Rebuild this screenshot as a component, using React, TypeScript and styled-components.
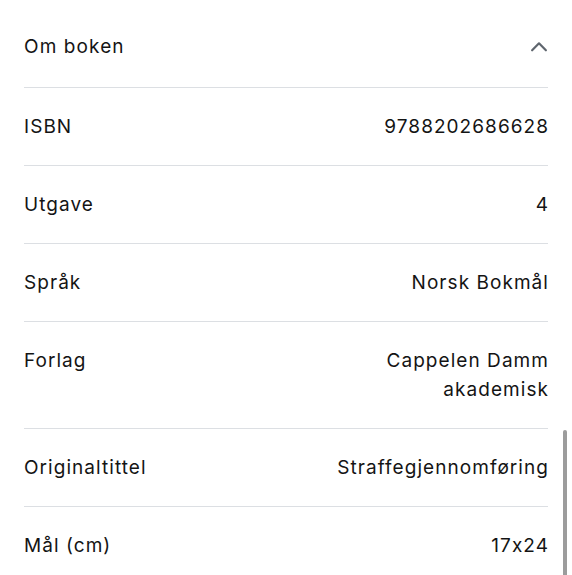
import styled, { createGlobalStyle } from 'styled-components';

const GlobalStyle = createGlobalStyle`
  html, body {
    margin: 0;
    padding: 0;
    background: #ffffff;
  }
  body {
    font-family: 'Inter', 'Noto Sans', sans-serif;
    color: #141414;
    -webkit-font-smoothing: antialiased;
  }
`;

const Page = styled.div`
  position: relative;
  width: 572px;
  height: 575px;
  overflow: hidden;
  background: #fff;
`;

const Section = styled.section`
  padding: 0 24px;
`;

const Header = styled.button`
  display: flex;
  align-items: center;
  justify-content: space-between;
  width: 100%;
  height: 88px;
  padding: 6px 0 0;
  box-sizing: border-box;
  background: none;
  border: none;
  border-bottom: 1px solid #dcdfe3;
  font-family: inherit;
  font-size: 19px;
  color: #141414;
  letter-spacing: 1.1px;
  cursor: pointer;
`;

const Chevron = styled.svg`
  width: 22px;
  height: 22px;
  margin-right: -2px;
  color: #5f666e;
`;

const List = styled.dl`
  margin: 0;
`;

const Row = styled.div`
  display: flex;
  justify-content: space-between;
  align-items: flex-start;
  gap: 24px;
  padding: 24px 0;
  line-height: 29px;
  font-size: 19px;
  letter-spacing: 1.05px;
  border-bottom: 1px solid #dcdfe3;
`;

const Label = styled.dt`
  margin: 0;
  flex-shrink: 0;
`;

const Value = styled.dd`
  margin: 0 -1px 0 0;
  text-align: right;
  max-width: 225px;
`;

const ScrollThumb = styled.div`
  position: absolute;
  right: 5px;
  top: 430px;
  width: 4px;
  height: 150px;
  border-radius: 2px;
  background: #9c9c9c;
`;

const details: [string, string][] = [
  ['ISBN', '9788202686628'],
  ['Utgave', '4'],
  ['Språk', 'Norsk Bokmål'],
  ['Forlag', 'Cappelen Damm akademisk'],
  ['Originaltittel', 'Straffegjennomføring'],
  ['Mål (cm)', '17x24'],
];

export default function App() {
  return (
    <>
      <GlobalStyle />
      <Page>
        <Section>
          <Header>
            <span>Om boken</span>
            <Chevron viewBox="0 0 24 24" fill="none" stroke="currentColor" strokeWidth="2.4" strokeLinecap="round" strokeLinejoin="round">
              <path d="M4.5 15.5l7.5-7.5 7.5 7.5" />
            </Chevron>
          </Header>
          <List>
            {details.map(([label, value]) => (
              <Row key={label}>
                <Label>{label}</Label>
                <Value>{value}</Value>
              </Row>
            ))}
          </List>
        </Section>
        <ScrollThumb />
      </Page>
    </>
  );
}
